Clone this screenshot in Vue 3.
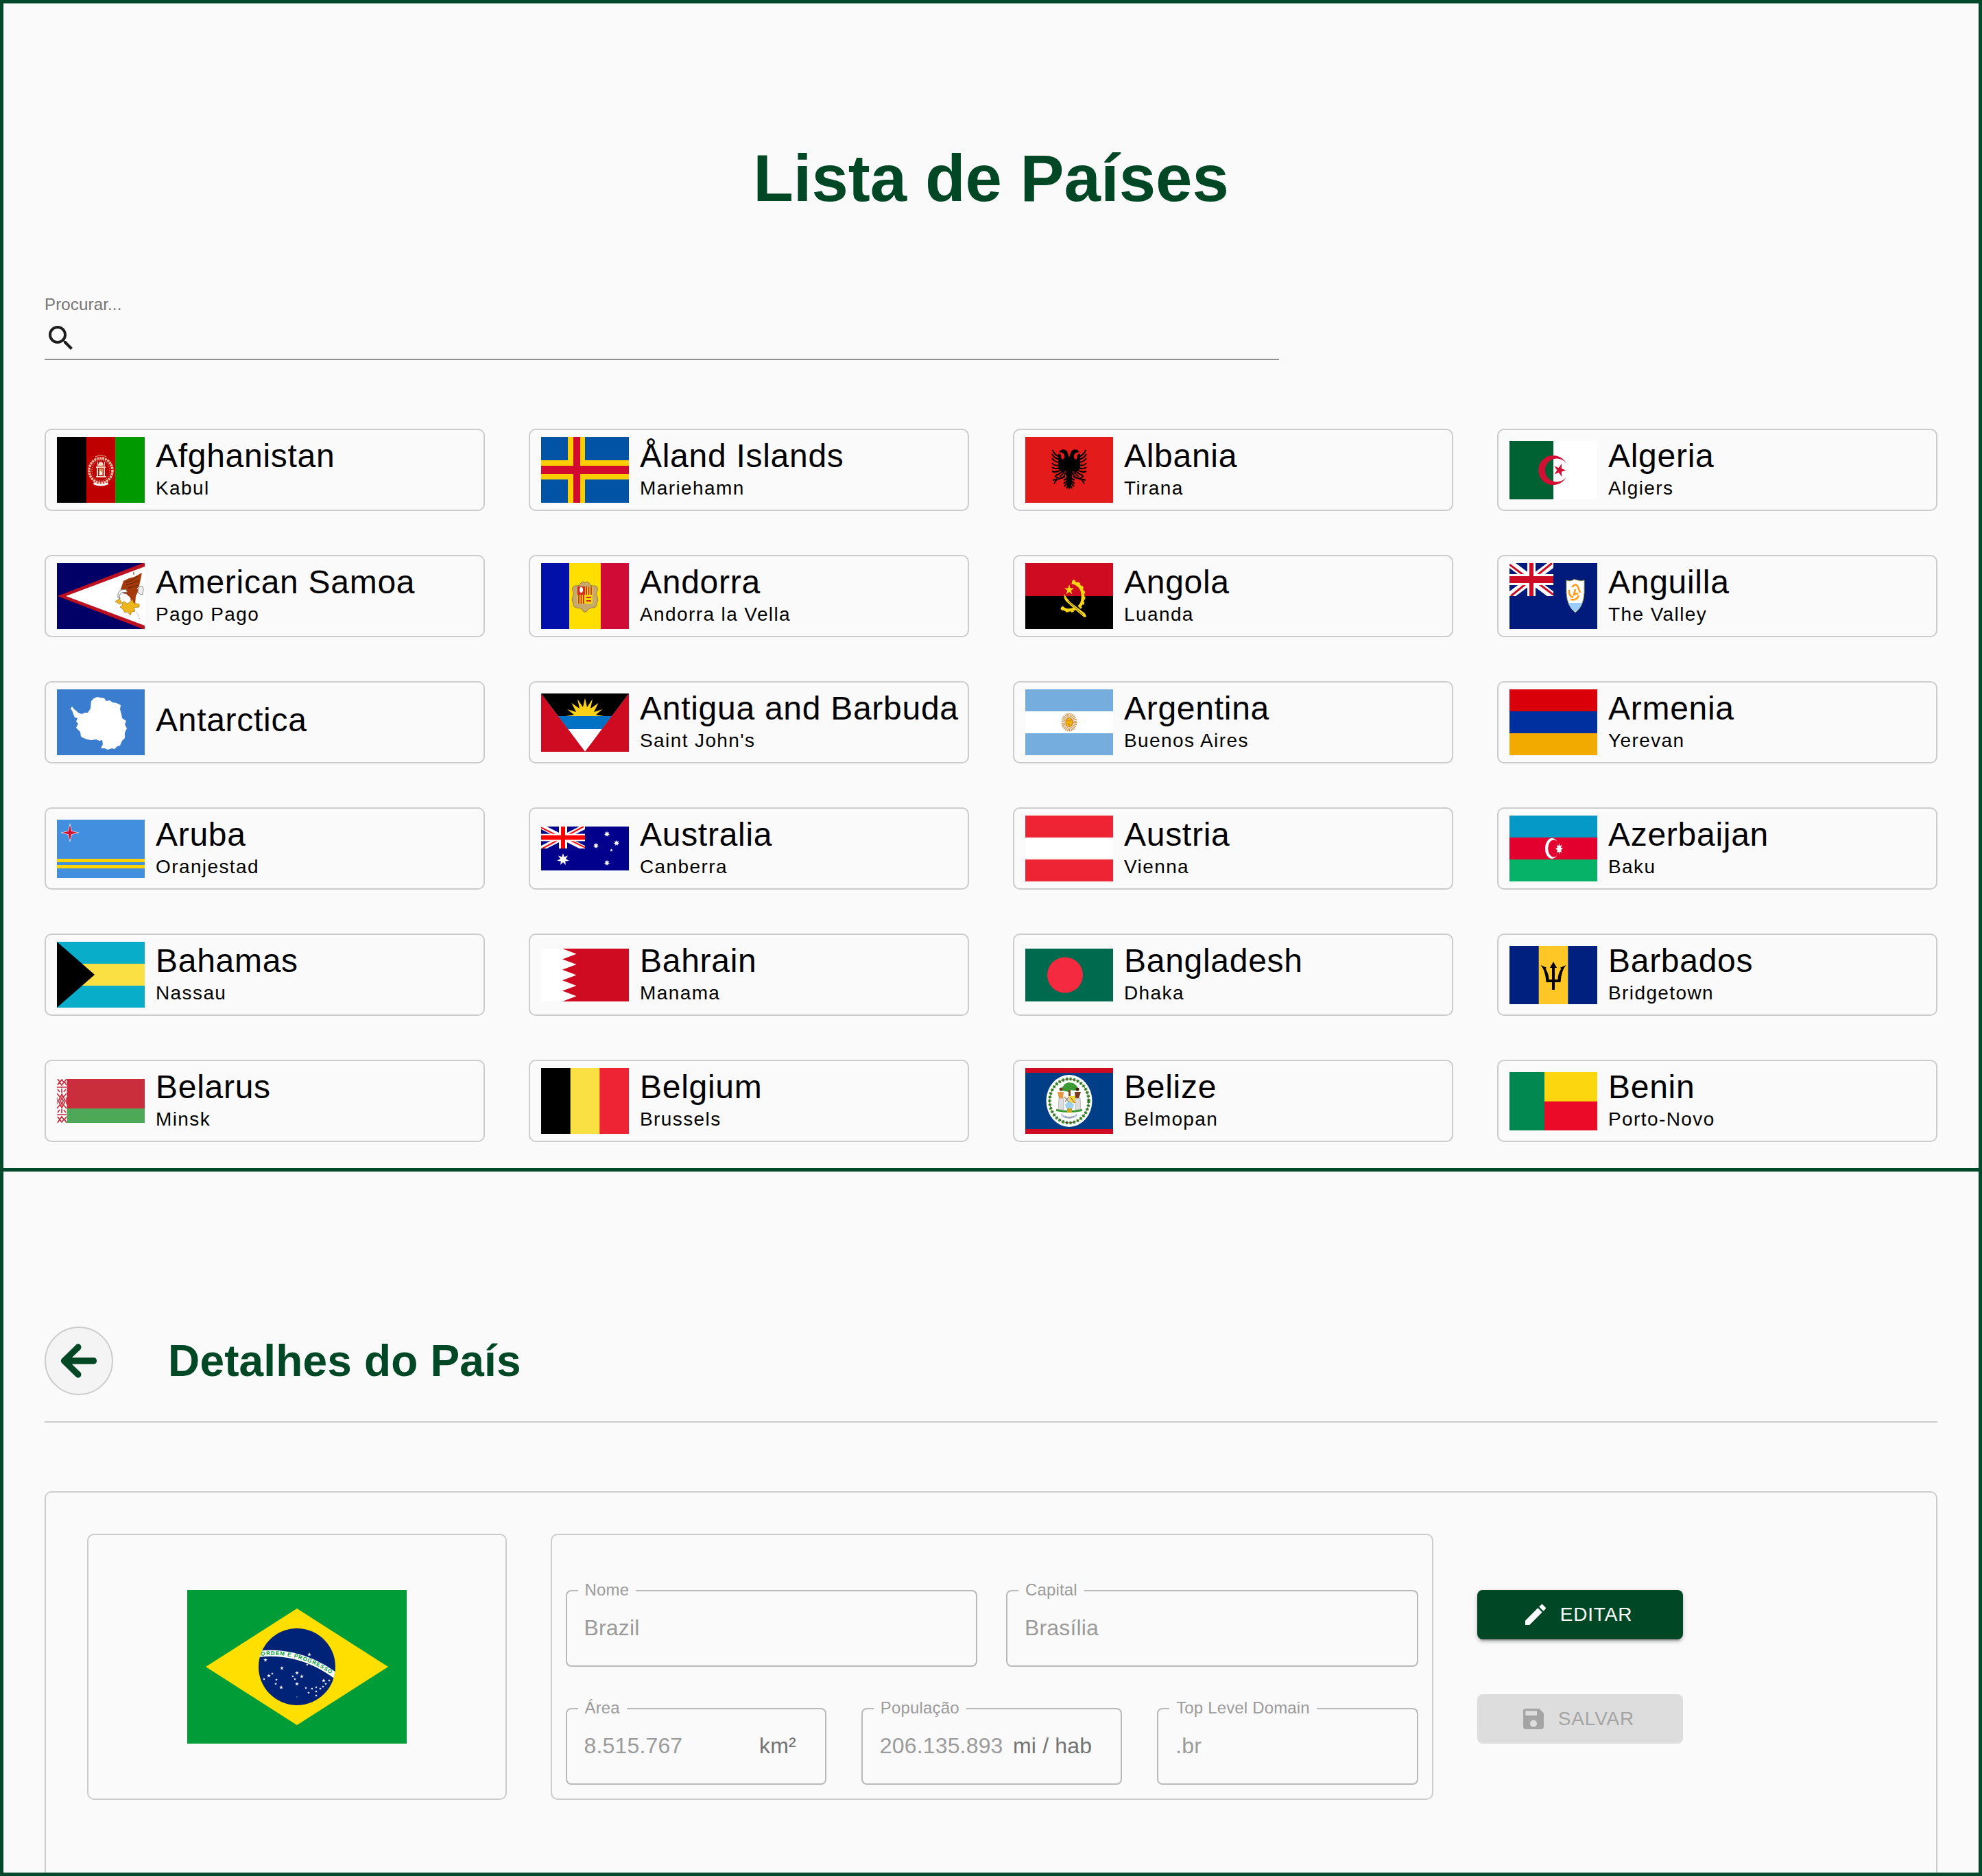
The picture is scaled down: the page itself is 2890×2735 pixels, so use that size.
<script setup>
import { ref } from 'vue'

// Points of a star polygon; ry lets the star be taller than it is wide.
function star(cx, cy, rx, ry, n, inner, turn = -90) {
  const pts = []
  for (let i = 0; i < n * 2; i++) {
    const k = i % 2 ? inner : 1
    const a = ((turn + (i * 180) / n) * Math.PI) / 180
    pts.push(`${(cx + rx * k * Math.cos(a)).toFixed(2)},${(cy + ry * k * Math.sin(a)).toFixed(2)}`)
  }
  return pts.join(' ')
}

const rect = (x, y, w, h, fill) => `<rect x="${x}" y="${y}" width="${w}" height="${h}" fill="${fill}"/>`
const poly = (points, fill) => `<polygon points="${points}" fill="${fill}"/>`
const ellipse = (cx, cy, rx, ry, fill) => `<ellipse cx="${cx}" cy="${cy}" rx="${rx}" ry="${ry}" fill="${fill}"/>`
const line = (d, stroke, w, extra = '') => `<path d="${d}" fill="none" stroke="${stroke}" stroke-width="${w}" ${extra}/>`
const columns = (h, a, b, c) => rect(0, 0, 43, h, a) + rect(42.7, 0, 43, h, b) + rect(85.3, 0, 42.7, h, c)
const rows = (a, b, c) => rect(0, 0, 128, 32, a) + rect(0, 32, 128, 32, b) + rect(0, 64, 128, 32, c)

function unionJack(h, blue, red) {
  const m = h / 2
  const u = h / 48
  return `<svg width="64" height="${h}" viewBox="0 0 64 ${h}">` +
    rect(0, 0, 64, h, blue) +
    line(`M0 0L64 ${h}M64 0L0 ${h}`, '#fff', 11 * u) +
    line(`M0 ${2 * u}L28 ${m - u}M64 ${h - 2 * u}L36 ${m + u}M62 0L35 ${m - 2 * u}M2 ${h}L29 ${m + 2 * u}`, red, 3 * u) +
    rect(26, 0, 12, h, '#fff') + rect(0, m - 8 * u, 64, 16 * u, '#fff') +
    rect(29, 0, 6, h, red) + rect(0, m - 5 * u, 64, 10 * u, red) + '</svg>'
}

const eagleHalf =
  '<path d="M64 30L61 21Q58 17 52 19L49 22L54 23Q58 25 57 31L54 33Q52 31 52 26L48 24L48 46L54 52L59 50L60 60L61 70L64 77Z"/>' +
  '<path d="M50 29Q42 26 40 19M50 33Q42 31 39 25M50 37Q43 37 39 31M50 41Q43 43 39 38M50 45Q43 48 39 44M52 48Q45 53 39 50M54 50Q49 55 44 56M57 51Q53 56 50 58M59 52Q57 57 54 60M58 58L49 61L40 63M49 61L43 57M46 62L42 68M62 60L56 63M62 63L56 68M62 66L57 72M63 69L60 75" fill="none" stroke="#000" stroke-width="2"/>'

const mosque =
  '<g fill="none" stroke="#e9b9a0"><ellipse cx="64" cy="49" rx="17" ry="18" stroke-width="3.6" stroke-dasharray="3 1"/>' +
  '<ellipse cx="64" cy="49" rx="13" ry="15" stroke="#fff" stroke-width="1" stroke-dasharray="1 2"/></g>' +
  '<g fill="#f4d9c8"><path d="M60 42q0-5 4-6q4 1 4 6zM57 43h14v2H57zM58 45h2v12h-2zM68 45h2v12h-2zM57 57h15v2H57z"/><path d="M59 36h1v6h-1zM69 36h1v6h-1z"/>' +
  '<path d="M61 46h6v10h-6z" fill="#d98a5c"/><path d="M63 49l3 3-1 4h-3z" fill="#fff"/><path d="M54 66q10 5 20 0l1 3q-11 5-22 0z" fill="#fff"/></g>' +
  '<path d="M56 29q8-4 16 0M59 32h10" stroke="#e9a58c" stroke-width="1.4" fill="none" stroke-dasharray="2 1"/>'

const flags = {
  af: columns(96, '#000', '#be0000', '#009a00') + mosque,
  ax: rect(0, 0, 128, 96, '#0053a5') + rect(39, 0, 25, 96, '#ffce00') + rect(0, 34, 128, 28, '#ffce00') + rect(47, 0, 10, 96, '#d30a2f') + rect(0, 42, 128, 12, '#d30a2f'),
  al: rect(0, 0, 128, 96, '#e41b1b') + `<g>${eagleHalf}</g><g transform="translate(128 0) scale(-1 1)">${eagleHalf}</g>`,
  dz: rect(0, 0, 64, 85, '#006233') + rect(64, 0, 64, 85, '#fff') + '<path d="M83 33A21.5 21.5 0 1 0 83 52A17 17 0 1 1 83 33Z" fill="#d21034"/>' + poly(star(73, 42.5, 9.5, 10, 5, 0.38, 0), '#d21034'),
  as: rect(0, 0, 128, 96, '#006') + poly('1,48 128,-1 128,97', '#bd1021') + poly('13,48 128,5 128,91', '#fff') +
    '<path d="M93 38l4-12 8-4 8-2 11-6-2 10-2 9-3 4 2 3-4 8-1 12-4 9-4-1 2-10-1-8-6-5-5-1z" fill="#a53a0a"/><path d="M99 28l10-3 9-6M101 32l9-3 10-4M104 36l8-2 7-2M112 17v-4" stroke="#5b1f05" fill="none"/>' +
    '<path d="M93 39q-5 4-4 11l3 2q-2-7 3-9l8-1-3-4z" fill="#fff" stroke="#777"/><path d="M119 35l6-1 1 4-1 8-4-1-3-3z" fill="#eee" stroke="#888"/><path d="M85 56l6-4 3 4-2 4zM94 58l4-2 4 3 5-2 3-5 2 6 8 2v4l-8 1 2 5-5 1-2 5-4-5-4 1-3-5-4-3 4-3z" fill="#efb51c" stroke="#8b6508" stroke-width=".6"/><path d="M116 71l5 11" stroke="#999" stroke-dasharray="1 1"/>',
  ad: rect(0, 0, 41, 96, '#0010a8') + rect(41, 0, 46, 96, '#fedf00') + rect(87, 0, 41, 96, '#cf0b36') +
    '<path d="M58 29q3-4 6 0q3-4 6 0q1 4 5 4q9-1 7 7q-3 4 0 9q2 5-1 10q1 5-5 6q-6 0-8 3q-2 4-4 3q-2 1-4-3q-2-3-8-3q-6-1-5-6q-3-5-1-10q3-5 0-9q-2-8 7-7q4 0 5-4z" fill="#c7a96b" stroke="#9a7c42"/>' +
    rect(53, 34, 11, 12, '#d52b1e') + rect(64, 34, 11, 12, '#fedf00') + rect(53, 46, 11, 13, '#fedf00') + rect(64, 46, 11, 13, '#fcd40c') +
    line('M66 34v12M69.5 34v12M73 34v12M55 46v13M58.5 46v13M62 46v13M66 50h7M66 55h7', '#d0222b', 1.8) + ellipse(58.5, 39, 2.5, 4, '#fff'),
  ao: rect(0, 0, 128, 48, '#ce0b20') + rect(0, 48, 128, 48, '#000') +
    line('M68 28Q84 31 84 49Q84 59 78 64M53 64Q61 72 73 66', '#f9d616', 4.5) + line('M69 25Q87 30 86.5 49Q86 61 80 66M52 66Q60 74 74 69', '#f9d616', 2, 'stroke-dasharray="4 4"') +
    poly(star(64, 39, 7.5, 8, 5, 0.38), '#f9d616') + '<path d="M57 45q-2 8 5 13l11 10 13 11 3-1q-1-5-5-7L66 57q-6-6-9-12z" fill="#f9d616"/>' + line('M62 55L84 75', '#000', 0.6),
  ai: rect(0, 0, 128, 96, '#001b7c') + unionJack(48, '#001b7c', '#ce0b24') +
    '<path d="M83 25q5 2 9 0 2-2 4-1t4 1q4 2 9 0v18q-1 20-13 29q-12-9-13-29z" fill="#fff" stroke="#a9a84c"/><path d="M86 58h20q-3 8-10 13q-7-5-10-13z" fill="#9cf"/>' +
    line('M91 35q6-7 9 0l3 8M87 39q-1 9 6 11M89 53q9 2 12-6M96 38l-2 8 6-2', '#ff9d1c', 2.6),
  aq: rect(0, 0, 128, 96, '#3a7dce') + poly('59,11 63,12 69,13 72,17 77,16 81,19 87,20 93,23 92,29 94,36 95,42 101,46 99,51 102,57 99,63 99,71 95,75 92,82 88,83 84,87 80,86 74,88 70,86 64,86 67,80 66,74 62,75 57,73 50,74 44,73 39,71 35,69 34,62 31,59 28,56 31,50 28,47 30,42 26,41 24,36 22,31 20,28 22,25 25,29 28,31 31,34 36,36 41,34 45,34 47,31 49,28 50,17 54,13', '#fff'),
  ag: rect(0, 0, 128, 85, '#ce0b20') + poly('0,0 128,0 64,85', '#fff') + poly('0,0 128,0 89,52 39,52', '#0072c6') + poly('0,0 128,0 103,33 25,33', '#000') +
    poly('0,0 64,85 0,85', '#ce0b20') + poly('128,0 64,85 128,85', '#ce0b20') +
    poly('36,33 48,31 38,23 51,27 44.5,14 56,22 53,8 61,20 64,6.5 67,20 75,8 72,22 83.5,14 77,27 89.5,23 80,31 92,33', '#fcd116'),
  ar: rows('#75addf', '#fff', '#75addf') + '<ellipse cx="64" cy="48" rx="8.5" ry="10.5" fill="none" stroke="#cf9148" stroke-width="6" stroke-dasharray="1.3 1"/>' + ellipse(64, 48, 5.5, 7, '#b87410') + ellipse(64, 48, 4.5, 6, '#f6b40e') + line('M61.5 46h2M64.5 46h2M62.5 51h3', '#85560a', 0.8),
  am: rows('#da0009', '#0030a0', '#f2a900'),
  aw: rect(0, 0, 128, 85, '#418fde') + rect(0, 57, 128, 5, '#ffd400') + rect(0, 66, 128, 5, '#ffd400') + poly(star(19, 19, 14, 14, 4, 0.28), '#fff') + poly(star(19, 19, 11.5, 11.5, 4, 0.27), '#d21034'),
  au: rect(0, 0, 128, 64, '#00008d') + unionJack(32, '#00008d', '#f00') + poly(star(32, 48, 9, 9, 7, 0.45), '#fff') +
    [[96, 11], [80, 28], [110, 24], [96, 53]].map(([x, y]) => poly(star(x, y, 4.3, 4.3, 7, 0.5), '#fff')).join('') + poly(star(102.5, 34.5, 2.6, 2.6, 5, 0.4), '#fff'),
  at: rows('#ee2435', '#fff', '#ee2435'),
  az: rows('#0599c8', '#e3002e', '#05b268') + ellipse(62, 48, 10, 15, '#fff') + ellipse(64.5, 48, 8.3, 12.5, '#e3002e') + poly(star(72.5, 48.5, 5.5, 8.5, 8, 0.5), '#fff'),
  bs: rows('#08adc9', '#fae042', '#08adc9') + poly('0,0 55,48 0,96', '#000'),
  bh: rect(0, 0, 128, 77, '#fff') + poly('31,0 51.5,7.7 31,15.4 51.5,23.1 31,30.8 51.5,38.5 31,46.2 51.5,53.9 31,61.6 51.5,69.3 31,77 128,77 128,0', '#ce0b20'),
  bd: rect(0, 0, 128, 77, '#006a4e') + ellipse(58, 38.5, 26, 26, '#f42a41'),
  bb: columns(85, '#00207f', '#ffc726', '#00207f') +
    '<path d="M62 64V53h-8.5q-1-17-8-25l9 4-2 1q5 8 5 16H62V32h-3l5-9 5 9h-3v17h4.5q0-8 5-16l-2-1 9-4q-7 8-8 25H66v11z"/>',
  by: rect(0, 0, 128, 43, '#ca2d3c') + rect(0, 43, 128, 21, '#4da957') + rect(0, 0, 14.5, 64, '#fff') +
    line('M1 0l3 4-3 5M14 0l-3 4 3 5M4 5l3-4 3 4-3 4zM0 12h14M1 15l3 4M13 15l-3 4M7 14v6M7.2 22l5 10-5 10-5-10zM7.2 27l2 5-2 5-2-5zM0 21l5 6M14 21l-5 6M0 43l5-6M14 43l-5-6M0 27v10M14 27v10M1 49l3-4M13 49l-3-4M7 44v6M0 52h14M4 59l3-4 3 4-3 4zM1 55l3 4-3 5M14 55l-3 4 3 5', '#ca2d3c', 1.7),
  be: columns(96, '#000', '#fae042', '#ee2435'),
  bz: rect(0, 0, 128, 96, '#003f87') + rect(0, 0, 128, 7, '#ce0b20') + rect(0, 89, 128, 7, '#ce0b20') + ellipse(64, 48, 33.5, 38, '#fff') +
    '<ellipse cx="64" cy="48" rx="28.5" ry="32" fill="none" stroke="#2f9a2f" stroke-width="4.5" stroke-dasharray="3 2.5"/><ellipse cx="64" cy="48" rx="28.5" ry="32" fill="none" stroke="#5b2b12" stroke-width=".8"/>' +
    '<path d="M54 28l4-5 5-2 7 1 5 4 2 5-5 2-7-1-2 3-4-1-6-1z" fill="#3c9a35"/><path d="M63 32h3v9h-3z" fill="#7a4a1c"/>' +
    '<circle cx="52" cy="31" r="2.5" fill="#6b3a12"/><circle cx="76" cy="31" r="2.5" fill="#3b1d10"/><path d="M47 35h9l-1 9h-6z" fill="#e9973f"/><path d="M72 35h9l-3 9h-5z" fill="#7b3a1c"/><path d="M49 44h7v17h-8zM73 44h7l1 17h-8z" fill="#dcdcdc" stroke="#999" stroke-width=".6"/>' +
    '<path d="M56 41h8v10h-6z" fill="#eee"/><path d="M64 41h9v10h-9z" fill="#f6d545"/><path d="M58 53l6-5 7 5q-1 8-6 9-6-1-7-9z" fill="#9cd0ee"/><path d="M57 42l7 8M64 42l-6 7M66 43l6 8" stroke="#7a4a1c" fill="none"/><path d="M45 60q19 4 38 0v3q-19 4-38 0z" fill="#3c9a35"/><path d="M61 59h7v6h-7z" fill="#c9a227"/><path d="M52 66q12 10 24 0l-1 5q-11 6-22 0z" fill="#b7c4dc"/>' +
    line('M58 71q6 2 12 0', '#444', 1, 'stroke-dasharray="1.5 .7"'),
  bj: rect(0, 0, 51.5, 85, '#008850') + rect(51, 0, 77, 43, '#fcd60f') + rect(51, 42.7, 77, 42.3, '#eb0a28')
}

const skyStars = [
  [114, 102, 3], [178, 94, 3], [175, 109, 2], [138, 114, 3], [160, 121, 3], [167, 126, 3], [154, 126, 2], [157, 130, 2], [160, 137, 3],
  [119, 125, 3], [124, 122, 2], [112, 130, 2], [130, 131, 2], [129, 137, 2], [137, 142, 3], [173, 143, 2], [177, 150, 2], [182, 144, 2],
  [188, 142, 2], [188, 148, 2], [188, 154, 2], [194, 144, 2], [198, 141, 2], [202, 137, 2], [199, 132, 3], [207, 132, 2], [160, 156, 1]
]

const countries = [
  { code: 'af', h: 96, name: 'Afghanistan', capital: 'Kabul' },
  { code: 'ax', h: 96, name: 'Åland Islands', capital: 'Mariehamn' },
  { code: 'al', h: 96, name: 'Albania', capital: 'Tirana' },
  { code: 'dz', h: 85, name: 'Algeria', capital: 'Algiers' },
  { code: 'as', h: 96, name: 'American Samoa', capital: 'Pago Pago' },
  { code: 'ad', h: 96, name: 'Andorra', capital: 'Andorra la Vella' },
  { code: 'ao', h: 96, name: 'Angola', capital: 'Luanda' },
  { code: 'ai', h: 96, name: 'Anguilla', capital: 'The Valley' },
  { code: 'aq', h: 96, name: 'Antarctica', capital: '' },
  { code: 'ag', h: 85, name: 'Antigua and Barbuda', capital: "Saint John's" },
  { code: 'ar', h: 96, name: 'Argentina', capital: 'Buenos Aires' },
  { code: 'am', h: 96, name: 'Armenia', capital: 'Yerevan' },
  { code: 'aw', h: 85, name: 'Aruba', capital: 'Oranjestad' },
  { code: 'au', h: 64, name: 'Australia', capital: 'Canberra' },
  { code: 'at', h: 96, name: 'Austria', capital: 'Vienna' },
  { code: 'az', h: 96, name: 'Azerbaijan', capital: 'Baku' },
  { code: 'bs', h: 96, name: 'Bahamas', capital: 'Nassau' },
  { code: 'bh', h: 77, name: 'Bahrain', capital: 'Manama' },
  { code: 'bd', h: 77, name: 'Bangladesh', capital: 'Dhaka' },
  { code: 'bb', h: 85, name: 'Barbados', capital: 'Bridgetown' },
  { code: 'by', h: 64, name: 'Belarus', capital: 'Minsk' },
  { code: 'be', h: 96, name: 'Belgium', capital: 'Brussels' },
  { code: 'bz', h: 96, name: 'Belize', capital: 'Belmopan' },
  { code: 'bj', h: 85, name: 'Benin', capital: 'Porto-Novo' }
]

const search = ref('')
const mainFields = [
  { id: 'nome', label: 'Nome', value: 'Brazil' },
  { id: 'capital', label: 'Capital', value: 'Brasília' }
]
const extraFields = [
  { id: 'area', label: 'Área', value: '8.515.767', unit: 'km²' },
  { id: 'populacao', label: 'População', value: '206.135.893', unit: 'mi / hab' },
  { id: 'tld', label: 'Top Level Domain', value: '.br' }
]
</script>

<template>
  <div class="page">
    <section class="screen list-screen">
      <h1 class="title">Lista de Países</h1>

      <div class="search-row">
        <div class="search">
          <label class="search-label" for="search">Procurar...</label>
          <div class="search-line">
            <svg class="search-icon" viewBox="0 0 24 24" aria-hidden="true">
              <path d="M15.5 14h-.79l-.28-.27C15.41 12.59 16 11.11 16 9.5 16 5.91 13.09 3 9.5 3S3 5.91 3 9.5 5.91 16 9.5 16c1.61 0 3.09-.59 4.23-1.57l.27.28v.79l5 4.99L20.49 19l-4.99-5zm-6 0C7.01 14 5 11.99 5 9.5S7.01 5 9.5 5 14 7.01 14 9.5 11.99 14 9.5 14z" />
            </svg>
            <input id="search" v-model="search" class="search-input" type="text" />
          </div>
        </div>
      </div>

      <ul class="countries">
        <li v-for="c in countries" :key="c.code">
          <a class="card" :href="'#' + c.code">
            <svg class="flag" :viewBox="`0 0 128 ${c.h}`" aria-hidden="true" v-html="flags[c.code]"></svg>
            <span class="card-text">
              <span class="name">{{ c.name }}</span>
              <span v-if="c.capital" class="capital">{{ c.capital }}</span>
            </span>
          </a>
        </li>
      </ul>
    </section>

    <section class="screen detail-screen">
      <header class="detail-header">
        <button class="back" type="button" aria-label="Voltar">
          <svg class="back-icon" viewBox="0 0 512 512" aria-hidden="true">
            <path d="M401.4 224h-214l83-79.4c11.9-12.5 11.9-32.7 0-45.2s-31.2-12.5-43.2 0L89 233.4c-6 5.8-9 13.7-9 22.4v.4c0 8.7 3 16.6 9 22.4l138.1 134c12 12.5 31.3 12.5 43.2 0 11.9-12.5 11.9-32.7 0-45.2l-83-79.4h214c16.9 0 30.6-14.3 30.6-32 .1-18-13.6-32-30.5-32z" />
          </svg>
        </button>
        <h2 class="subtitle">Detalhes do País</h2>
      </header>

      <div class="panel">
        <div class="box flag-box">
          <svg class="big-flag" viewBox="0 0 320 224" role="img" aria-label="Brazil">
            <defs>
              <clipPath id="globe"><circle cx="160" cy="112" r="56" /></clipPath>
            </defs>
            <rect width="320" height="224" fill="#009c37" />
            <polygon points="27,112 160,27 293,112 160,197" fill="#fedf00" />
            <circle cx="160" cy="112" r="56" fill="#002277" />
            <g clip-path="url(#globe)">
              <path d="M100 94C130 89 175 93 219 127" fill="none" stroke="#fff" stroke-width="9" />
            </g>
            <path id="motto" d="M108 96C132 92 176 96 218 129" fill="none" />
            <text class="motto"><textPath href="#motto">ORDEM E PROGRESSO</textPath></text>
            <polygon v-for="(s, i) in skyStars" :key="i" :points="star(s[0], s[1], s[2], s[2], 5, 0.4)" fill="#fff" />
          </svg>
        </div>

        <form class="box form-box" @submit.prevent>
          <div class="fields two">
            <div v-for="f in mainFields" :key="f.id" class="field">
              <label class="field-label" :for="f.id">{{ f.label }}</label>
              <input :id="f.id" class="field-input" type="text" :value="f.value" disabled />
            </div>
          </div>
          <div class="fields three">
            <div v-for="f in extraFields" :key="f.id" class="field">
              <label class="field-label" :for="f.id">{{ f.label }}</label>
              <input :id="f.id" class="field-input" type="text" :value="f.value" disabled />
              <span v-if="f.unit" class="unit">{{ f.unit }}</span>
            </div>
          </div>
        </form>

        <div class="actions">
          <button class="btn btn-edit" type="button">
            <svg class="btn-icon" viewBox="0 0 24 24" aria-hidden="true">
              <path d="M3 17.25V21h3.75L17.81 9.94l-3.75-3.75L3 17.25zM20.71 7.04c.39-.39.39-1.02 0-1.41l-2.34-2.34c-.39-.39-1.02-.39-1.41 0l-1.83 1.83 3.75 3.75 1.83-1.83z" />
            </svg>
            <span>EDITAR</span>
          </button>
          <button class="btn btn-save" type="button" disabled>
            <svg class="btn-icon" viewBox="0 0 24 24" aria-hidden="true">
              <path d="M17 3H5c-1.11 0-2 .9-2 2v14c0 1.1.89 2 2 2h14c1.1 0 2-.9 2-2V7l-4-4zm-5 16c-1.66 0-3-1.34-3-3s1.34-3 3-3 3 1.34 3 3-1.34 3-3 3zm3-10H5V5h10v4z" />
            </svg>
            <span>SALVAR</span>
          </button>
        </div>
      </div>
    </section>
  </div>
</template>

<style>
body {
  margin: 0;
  background: #fafafa;
}
</style>

<style scoped>
.page {
  display: flex;
  flex-direction: column;
  height: 100vh;
  color: #000;
  font-family: "Liberation Sans", Arial, Helvetica, sans-serif;
  letter-spacing: 0.01em;
}

.page *,
.page {
  box-sizing: border-box;
}

.screen {
  padding: 0 60px;
  border: 5px solid #00492a;
  background: #fafafa;
}

.list-screen {
  flex: none;
  padding-top: 199px;
  padding-bottom: 38px;
}

.title {
  margin: 0 0 113px;
  color: #004725;
  font-size: 96px;
  font-weight: 700;
  line-height: 112px;
  letter-spacing: 0;
  text-align: center;
}

.search-row {
  display: grid;
  grid-template-columns: 2fr 1fr;
  column-gap: 60px;
  margin-bottom: 100px;
}

.search {
  display: flex;
  flex-direction: column;
  gap: 10px;
}

.search-label {
  color: #757575;
  font-size: 24px;
  line-height: 30px;
}

.search-line {
  display: flex;
  align-items: center;
  gap: 16px;
  padding-bottom: 6px;
  border-bottom: 2px solid #919191;
}

.search-icon {
  flex: none;
  width: 48px;
  height: 48px;
  fill: #1c1c1c;
}

.search-input {
  flex: 1;
  min-width: 0;
  height: 48px;
  padding: 0;
  border: 0;
  outline: 0;
  background: transparent;
  font: inherit;
  font-size: 32px;
}

.countries {
  display: grid;
  grid-template-columns: repeat(4, minmax(0, 1fr));
  gap: 64px;
  margin: 0;
  padding: 0;
  list-style: none;
}

.card {
  display: flex;
  align-items: center;
  gap: 16px;
  min-height: 120px;
  padding: 0 16px;
  border: 2px solid #ccc;
  border-radius: 10px;
  color: #000;
  text-decoration: none;
}

.flag {
  flex: none;
  width: 128px;
}

.card-text {
  display: flex;
  flex-direction: column;
  padding-bottom: 6px;
  white-space: nowrap;
}

.name {
  font-size: 48px;
  line-height: 60px;
  letter-spacing: 0.015em;
}

.capital {
  font-size: 28px;
  line-height: 34px;
  letter-spacing: 0.05em;
}

.detail-screen {
  display: flex;
  flex: 1;
  flex-direction: column;
  min-height: 0;
  padding-top: 226px;
  border-top: 0;
}

.detail-header {
  display: flex;
  align-items: center;
  gap: 80px;
  margin-bottom: 100px;
  padding-bottom: 38px;
  border-bottom: 2px solid #ccc;
}

.back {
  display: flex;
  align-items: center;
  justify-content: center;
  width: 100px;
  height: 100px;
  padding: 0;
  border: 2px solid #ccc;
  border-radius: 50%;
  background: #f4f4f4;
}

.back-icon {
  flex: none;
  width: 76px;
  height: 76px;
  fill: #004725;
}

.subtitle {
  margin: 0;
  color: #004725;
  font-size: 64px;
  font-weight: 700;
  line-height: 72px;
}

.panel {
  display: grid;
  flex: 1;
  grid-template-columns: repeat(12, minmax(0, 1fr));
  align-items: start;
  column-gap: 64px;
  padding: 60px 58px 0 60px;
  border: 2px solid #ccc;
  border-bottom: 0;
  border-radius: 10px 10px 0 0;
}

.box {
  border: 2px solid #ccc;
  border-radius: 10px;
}

.flag-box {
  display: flex;
  grid-column: span 3;
  justify-content: center;
  padding: 80px 0;
}

.big-flag {
  width: 320px;
  height: 224px;
}

.motto {
  fill: #009c37;
  font-size: 8px;
  font-weight: 700;
  letter-spacing: 1px;
}

.form-box {
  display: flex;
  flex-direction: column;
  grid-column: span 6;
  gap: 60px;
  padding: 80px 20px 20px;
}

.fields {
  display: grid;
}

.two {
  grid-template-columns: repeat(2, minmax(0, 1fr));
  column-gap: 42px;
}

.three {
  grid-template-columns: repeat(3, minmax(0, 1fr));
  column-gap: 51px;
}

.field {
  position: relative;
  display: flex;
  align-items: center;
  gap: 8px;
  height: 112px;
  padding: 0 42px 2px 25px;
  border: 2px solid #b9b9b9;
  border-radius: 8px;
}

.field-label {
  position: absolute;
  top: -14px;
  left: 16px;
  padding: 0 10px;
  background: #fafafa;
  color: #9b9b9b;
  font-size: 24px;
  line-height: 24px;
}

.field-input {
  flex: 1;
  min-width: 0;
  padding: 0;
  border: 0;
  background: transparent;
  color: #9b9b9b;
  font-family: inherit;
  font-size: 32px;
  letter-spacing: inherit;
  line-height: 38px;
}

.unit {
  flex: none;
  color: #737373;
  font-size: 32px;
  line-height: 38px;
}

.actions {
  display: flex;
  grid-column: span 3;
  flex-direction: column;
  align-items: flex-start;
  gap: 80px;
  padding-top: 82px;
}

.btn {
  display: flex;
  align-items: center;
  justify-content: center;
  gap: 16px;
  width: 300px;
  height: 72px;
  padding: 0 8px 0 0;
  border: 0;
  border-radius: 8px;
  font-family: inherit;
  font-size: 28px;
  letter-spacing: 0.03em;
}

.btn-icon {
  flex: none;
  width: 40px;
  height: 40px;
  fill: currentColor;
}

.btn-edit {
  background: #004725;
  box-shadow: 0 6px 2px -4px rgba(0, 0, 0, 0.2), 0 4px 4px rgba(0, 0, 0, 0.14), 0 2px 10px rgba(0, 0, 0, 0.12);
  color: #fff;
}

.btn-save {
  background: #ddd;
  color: #a4a4a4;
}
</style>
